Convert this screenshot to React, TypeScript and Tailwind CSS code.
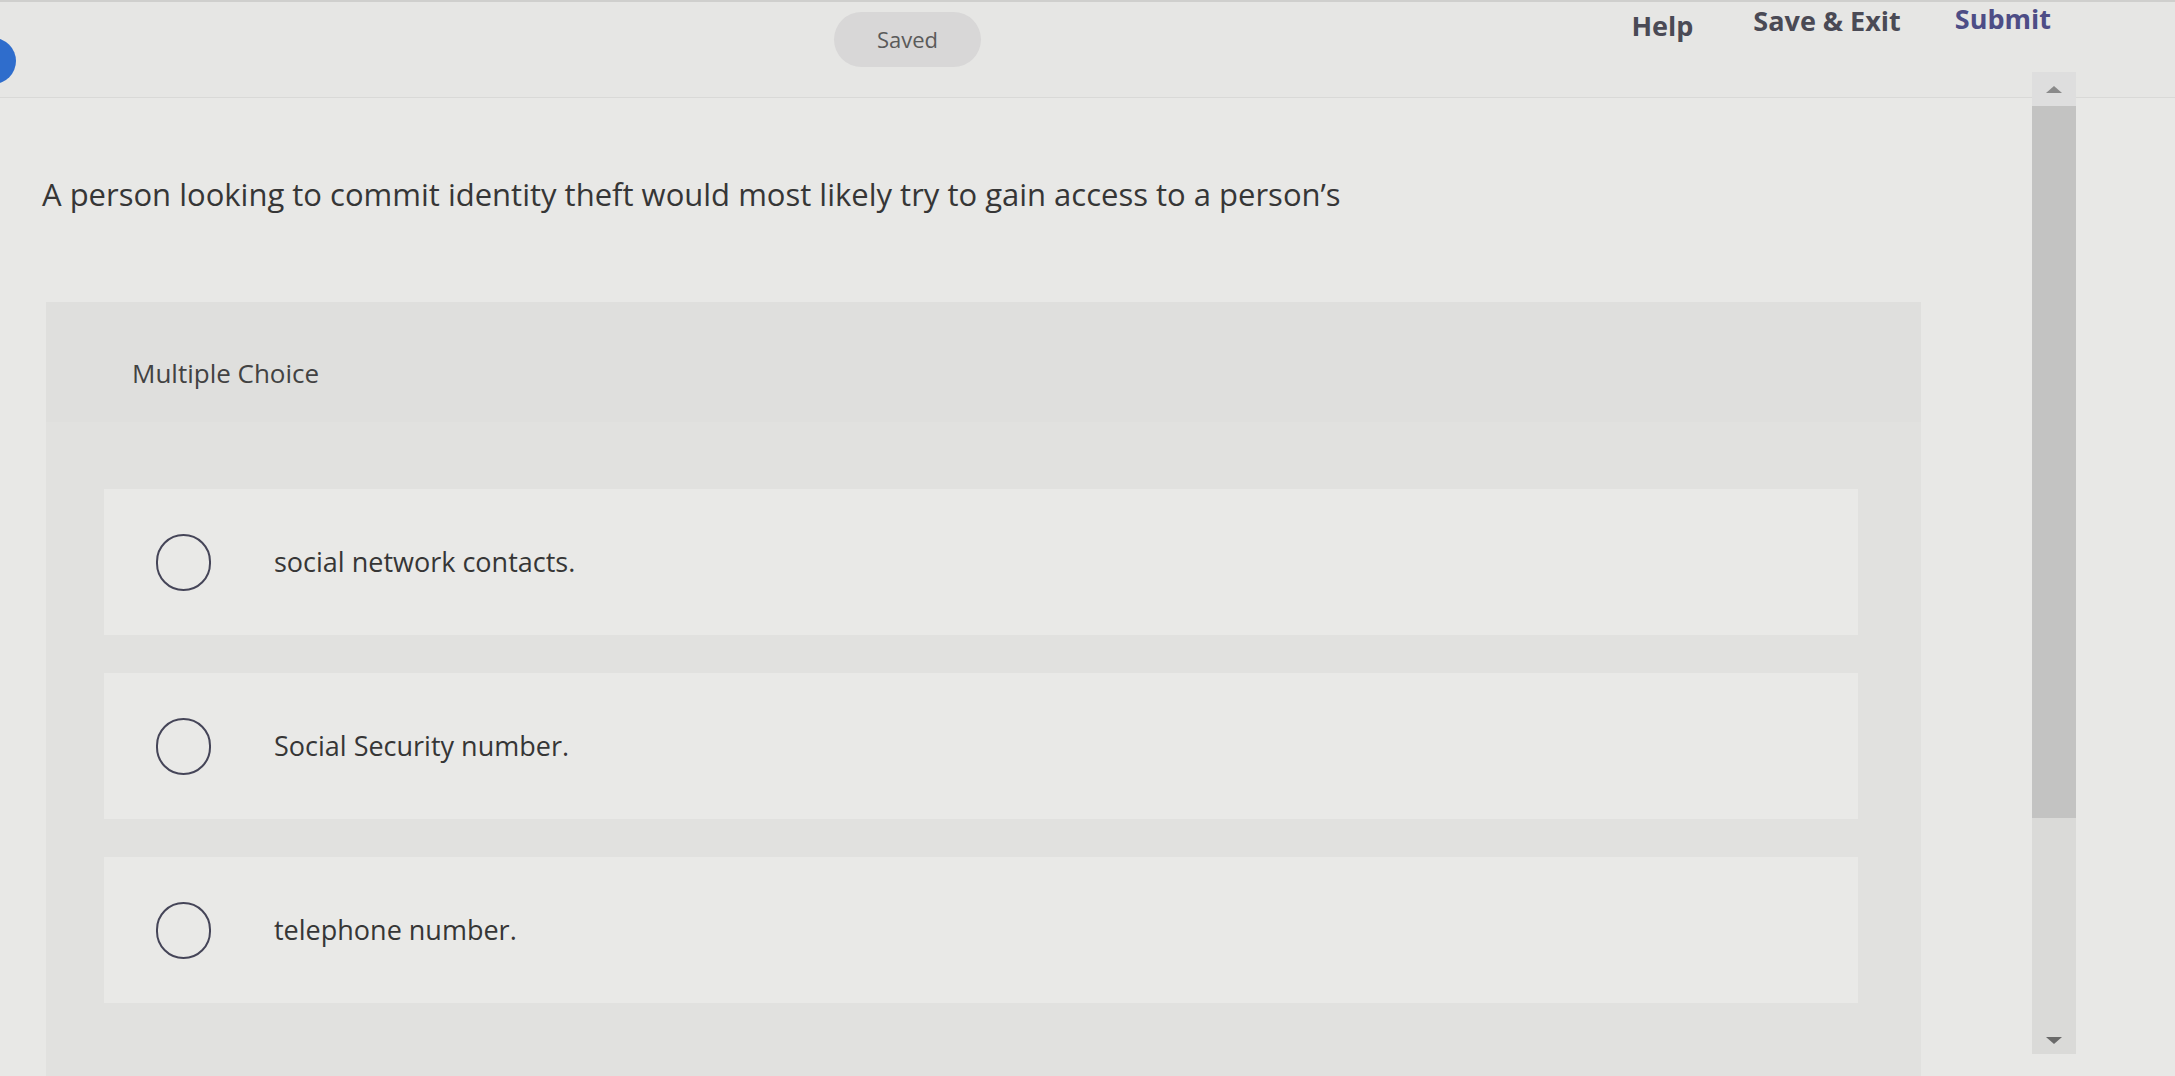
const OPTIONS = ['social network contacts.', 'Social Security number.', 'telephone number.']

function Radio() {
  return <span className="h-[57px] w-[55px] shrink-0 rounded-full border-2 border-[#454558]" />
}

export default function App() {
  return (
    <div className="relative flex h-[1076px] w-[2175px] flex-col overflow-hidden bg-[#e8e8e6] font-['Open_Sans',sans-serif] text-[#3a3a3a]">
      {/* top bar */}
      <div className="relative flex h-[98px] shrink-0 border-b border-t-2 border-b-[#d9d9d7] border-t-[#cfcfcd] bg-[#e6e6e4]">
        <span className="absolute -left-[30px] top-[36px] h-[46px] w-[46px] rounded-full bg-[#2f6dcc]" />
        <div className="ml-[834px] mt-[10px] flex h-[55px] w-[147px] items-center justify-center rounded-full bg-[#d8d7d7] text-[22px] text-[#5a5a5a]">
          Saved
        </div>
        <nav className="ml-auto mr-[124px] flex items-start gap-[54px] text-[27px] font-bold leading-[34px]">
          <span className="mr-[6px] mt-[7px] text-[#4a4a55]">Help</span>
          <span className="mt-[2px] text-[#4a4a55]">Save &amp; Exit</span>
          <span className="text-[#4d4d86]">Submit</span>
        </nav>
      </div>

      <div className="flex min-h-0 flex-1">
        <main className="flex-1">
          <p className="ml-[42px] mt-[76px] text-[31px] leading-[40px] text-[#363636]">
            A person looking to commit identity theft would most likely try to gain access to a person’s
          </p>

          <section className="ml-[46px] mt-[88px] h-[800px] w-[1875px] bg-[#e1e1df]">
            <div className="flex h-[120px] items-center bg-[#dfdfdd] pl-[86px] pt-[22px] text-[26px] text-[#424242]">
              Multiple Choice
            </div>
            <div className="flex flex-col gap-[38px] pl-[58px] pr-[63px] pt-[67px]">
              {OPTIONS.map((o) => (
                <div key={o} className="flex h-[146px] items-center gap-[63px] bg-[#e9e9e7] pl-[52px]">
                  <Radio />
                  <span className="text-[27px] text-[#363636]">{o}</span>
                </div>
              ))}
            </div>
          </section>
        </main>

        {/* scrollbar */}
        <div className="relative -mt-[26px] mb-[22px] mr-[99px] flex w-[44px] flex-col bg-[#dadad8]">
          <div className="flex h-[34px] items-center justify-center bg-[#dedede]">
            <span className="h-0 w-0 border-x-[8px] border-b-[7px] border-x-transparent border-b-[#8a8a8a]" />
          </div>
          <div className="h-[712px] bg-[#c3c3c2]" />
          <div className="flex flex-1 items-end justify-center pb-[10px]">
            <span className="h-0 w-0 border-x-[8px] border-t-[7px] border-x-transparent border-t-[#6a6a6a]" />
          </div>
        </div>
      </div>
    </div>
  )
}
